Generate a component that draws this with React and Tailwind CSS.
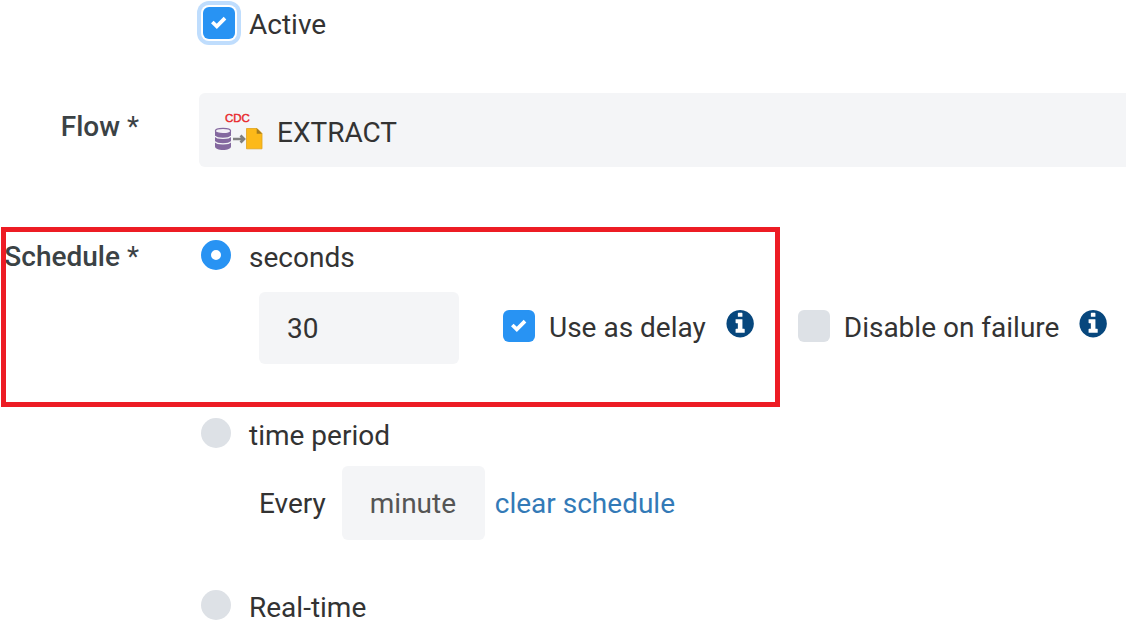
import { useState } from "react";

const text = "text-[28px] leading-9";

function Checkbox({ label, checked, onChange, highlighted }) {
  return (
    <label className={`flex shrink-0 items-start gap-3.5 whitespace-nowrap ${text}`}>
      <span className="grid shrink-0">
        <input
          type="checkbox"
          checked={checked}
          onChange={(e) => onChange(e.target.checked)}
          className={`col-start-1 row-start-1 size-8 appearance-none rounded-md bg-[#dde1e6] checked:bg-[#2893f3] ${
            highlighted ? "ring-4 ring-[#bfddfd] ring-offset-2" : ""
          }`}
        />
        {checked && (
          <svg
            viewBox="0 0 32 32"
            className="pointer-events-none col-start-1 row-start-1 size-8"
            aria-hidden="true"
          >
            <path d="M9.300 15L13.800 19.400L22 11.100" fill="none" stroke="#fff" strokeWidth="3.700" />
          </svg>
        )}
      </span>
      <span>{label}</span>
    </label>
  );
}

function Radio({ label, value, selected, onSelect }) {
  return (
    <label className={`flex w-fit items-start gap-[18px] pl-0.5 ${text}`}>
      <input
        type="radio"
        name="schedule"
        value={value}
        checked={selected === value}
        onChange={() => onSelect(value)}
        className="size-[30px] shrink-0 appearance-none rounded-full border-[#2893f3] bg-[#dde1e6] checked:border-10 checked:bg-white"
      />
      <span>{label}</span>
    </label>
  );
}

function Info({ label }) {
  return (
    <button type="button" aria-label={label} className="shrink-0 text-[#07477d]">
      <svg viewBox="104 128 1568 1568" className="size-7" fill="currentColor" aria-hidden="true">
        <path d="M1152 1376v-160q0-14-9-23t-23-9h-96v-512q0-14-9-23t-23-9h-320q-14 0-23 9t-9 23v160q0 14 9 23t23 9h96v320h-96q-14 0-23 9t-9 23v160q0 14 9 23t23 9h448q14 0 23-9t9-23zM1024 480v-160q0-14-9-23t-23-9h-192q-14 0-23 9t-9 23v160q0 14 9 23t23 9h192q14 0 23-9t9-23zM1664 896q0 209-103 385.500t-279.500 279.500-385.500 103-385.500-103-279.500-279.500-103-385.500 103-385.500 279.500-279.500 385.500-103 385.500 103 279.500 279.500 103 385.500z" />
      </svg>
    </button>
  );
}

function FlowIcon() {
  return (
    <svg viewBox="0 0 50 42" className="h-[42px] w-[50px] shrink-0" aria-hidden="true">
      <text
        x="11"
        y="11.500"
        fontSize="11.500"
        fill="#e8262a"
        stroke="#e8262a"
        strokeWidth="0.400"
        fontFamily="Liberation Sans, sans-serif"
      >
        CDC
      </text>
      <path
        d="M1 21.500V36.500C1 38.700 4.600 40 9 40S17 38.700 17 36.500V21.500Z"
        fill="#84689f"
      />
      <ellipse cx="9" cy="21" rx="7.600" ry="2.700" fill="#f3eff6" stroke="#84689f" strokeWidth="1.200" />
      <path
        d="M1 26.200C3 29.200 15 29.200 17 26.200M1 31.700C3 34.700 15 34.700 17 31.700"
        fill="none"
        stroke="#f4f5f7"
        strokeWidth="1.200"
      />
      <path d="M19 29H29.500M26.500 25.500L30 29L26.500 32.500" fill="none" stroke="#808080" strokeWidth="2.700" />
      <path d="M32.500 18.500H43L48 23.500V38.800H32.500Z" fill="#fcb919" stroke="#e0a21c" strokeWidth="0.800" />
      <path d="M42.700 18.200L48.200 23.800H42.700Z" fill="#a67c1e" />
    </svg>
  );
}

export default function App() {
  const [active, setActive] = useState(true);
  const [mode, setMode] = useState("seconds");
  const [delay, setDelay] = useState(true);
  const [disable, setDisable] = useState(false);

  return (
    <form
      className={`overflow-x-hidden bg-white pt-[7px] font-[Roboto,sans-serif] text-[#333] ${text}`}
      onSubmit={(e) => e.preventDefault()}
    >
      <div className="pl-[203px]">
        <Checkbox label="Active" checked={active} onChange={setActive} highlighted />
      </div>

      <div className="mt-[50px] grid grid-cols-[139px_1fr] gap-x-[60px]">
        <label htmlFor="flow" className="pt-4 text-right font-medium text-[#3b4245]">
          Flow <span className="font-normal">*</span>
        </label>
        <button
          id="flow"
          type="button"
          className="flex h-[74px] items-center gap-[13px] rounded-l-md bg-[#f4f5f7] pt-0.5 pl-[15px] text-left"
        >
          <FlowIcon />
          <span className="pt-1">EXTRACT</span>
        </button>
      </div>

      <div
        role="radiogroup"
        aria-labelledby="schedule-label"
        className="relative mt-[72px] grid grid-cols-[139px_1fr] gap-x-[60px]"
      >
        <span id="schedule-label" className="text-right font-medium whitespace-nowrap text-[#3b4245]">
          Schedule <span className="font-normal">*</span>
        </span>
        <div className="min-w-0 pt-px">
          <Radio label="seconds" value="seconds" selected={mode} onSelect={setMode} />
          <div className="mt-4 flex items-start pl-[60px]">
            <input
              type="text"
              aria-label="Seconds"
              defaultValue="30"
              className="h-[72px] w-[200px] shrink-0 rounded-md bg-[#f4f5f7] px-7"
            />
            <div className="flex items-start gap-11 pt-[18px] pl-11">
              <div className="flex items-start gap-5">
                <Checkbox label="Use as delay" checked={delay} onChange={setDelay} />
                <Info label="About use as delay" />
              </div>
              <div className="flex items-start gap-5">
                <Checkbox label="Disable on failure" checked={disable} onChange={setDisable} />
                <Info label="About disable on failure" />
              </div>
            </div>
          </div>

          <div className="mt-[54px]">
            <Radio label="time period" value="period" selected={mode} onSelect={setMode} />
          </div>
          <div className="mt-3 flex items-baseline pl-[60px]">
            <label htmlFor="period" className="mr-4">
              Every
            </label>
            <select
              id="period"
              defaultValue="minute"
              className="h-[74px] w-[143px] appearance-none rounded-md bg-[#f4f5f7] px-7 pt-0.5 text-[#555]"
            >
              <option>minute</option>
              <option>hour</option>
              <option>day</option>
            </select>
            <a href="#clear" className="ml-2.5 text-[#337ab7]">
              clear schedule
            </a>
          </div>

          <div className="mt-[50px]">
            <Radio label="Real-time" value="realtime" selected={mode} onSelect={setMode} />
          </div>
        </div>

        <div className="pointer-events-none absolute -top-3 left-px h-[180px] w-[779px] border-5 border-[#ed1c24]" />
      </div>
    </form>
  );
}
